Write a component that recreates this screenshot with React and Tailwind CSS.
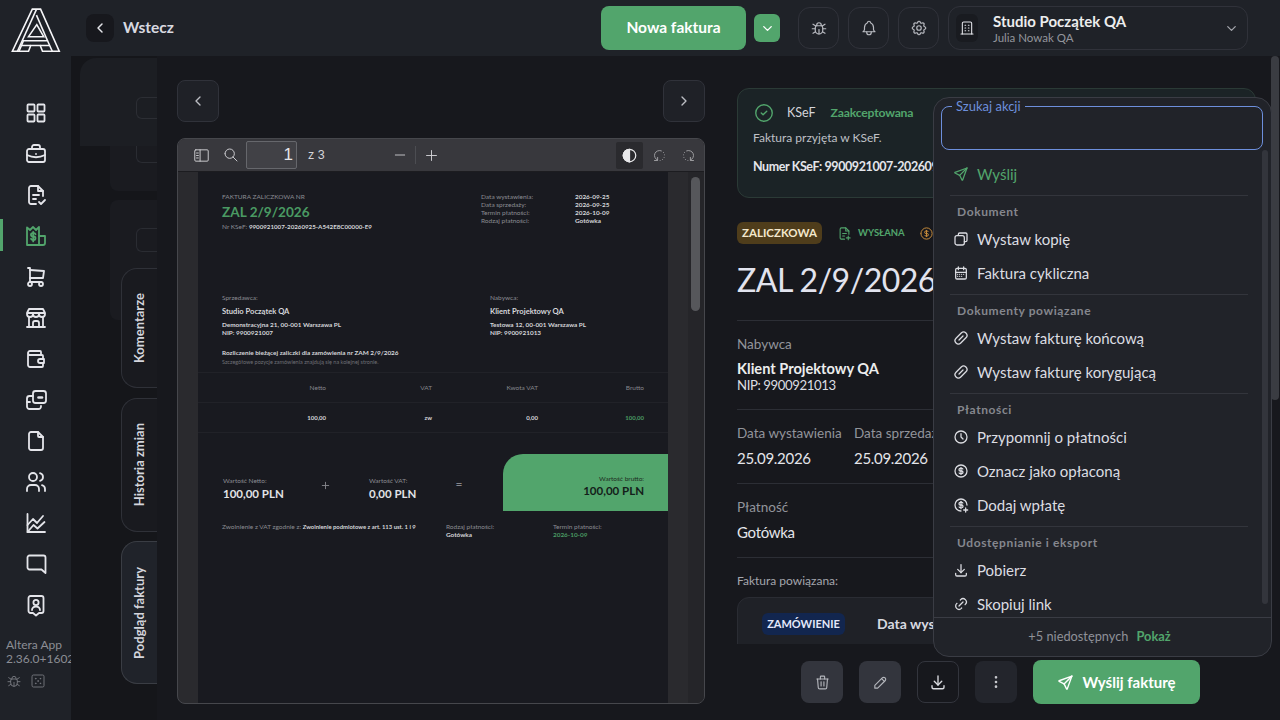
import React from "react";
import {
  TbBug, TbBell, TbSettings, TbBuilding, TbChevronDown, TbChevronLeft, TbChevronRight,
  TbTrash, TbPencil, TbDownload, TbDotsVertical, TbSend, TbBriefcase,
  TbShoppingCart, TbBuildingStore, TbWallet, TbFile, TbUsers,
  TbDice5, TbSearch, TbMinus, TbPlus,
  TbRotate2, TbRotateClockwise2, TbCircleCheck, TbCoin,
  TbCalendarMonth, TbLink, TbClock,
} from "react-icons/tb";

const font = { fontFamily: "Lato, 'Noto Sans', sans-serif" };

const Svg = ({ size = 24, strokeWidth = 2, className, children }) => (
  <svg width={size} height={size} viewBox="0 0 24 24" fill="none" stroke="currentColor" strokeWidth={strokeWidth} strokeLinecap="round" strokeLinejoin="round" className={className}>{children}</svg>
);
const IGrid = (p) => <Svg {...p}><rect x="3.5" y="3.5" width="7" height="7" rx="0.8" /><rect x="13.5" y="3.5" width="7" height="7" rx="0.8" /><rect x="3.5" y="13.5" width="7" height="7" rx="0.8" /><rect x="13.5" y="13.5" width="7" height="7" rx="0.8" /></Svg>;
const IFileCheck = (p) => <Svg {...p}><path d="M12 21H7a2 2 0 0 1-2-2V5a2 2 0 0 1 2-2h7l5 5v5" /><path d="M14 3v5h5" /><path d="M9 12h6" /><path d="M9 16h3" /><path d="M15 19l2 2 4-4" /></Svg>;
const IFileSend = (p) => <Svg {...p}><path d="M12 21H7a2 2 0 0 1-2-2V5a2 2 0 0 1 2-2h7l5 5v5" /><path d="M14 3v5h5" /><path d="M9 12h6" /><path d="M9 16h3" /><path d="M15 19h6" /><path d="M18 16v6" /></Svg>;
const IReceipt = (p) => <Svg {...p}><path d="M3 21V3.5L6 6l3-3 3 3 3-3v18z" /><path d="M15 12h6v7a2 2 0 0 1-2 2h-4" /><path d="M11.5 10.2a1.5 1.5 0 0 0-1.4-1H8.6a1.6 1.6 0 0 0 0 3.3h1.2a1.6 1.6 0 0 1 0 3.3H8.4a1.5 1.5 0 0 1-1.4-1" /><path d="M9.2 7.8v9.6" /></Svg>;
const IWalletSwap = (p) => <Svg {...p}><rect x="9" y="3" width="13" height="12" rx="2.5" /><path d="M14.5 9.5H18" strokeWidth="2.6" /><path d="M9 8H5.5a2.5 2.5 0 0 0-2.5 2.5V13" /><path d="M3 14h3" /><path d="M3 14v4.5A2.5 2.5 0 0 0 5.5 21h9a2.5 2.5 0 0 0 2.5-2.5V18" /></Svg>;
const IChart = (p) => <Svg {...p}><path d="M3.5 3v18H21" /><path d="M3.5 14L9 8l4 4 6-7" /><path d="M3.5 21l6-7 4 3.5 7-6.5" /></Svg>;
const IMsg = (p) => <Svg {...p}><path d="M5.5 3.5h14a2 2 0 0 1 2 2V21l-4-3.5h-12a2 2 0 0 1-2-2v-10a2 2 0 0 1 2-2z" /></Svg>;
const IUserTag = (p) => <Svg {...p}><path d="M6.5 3h11a2 2 0 0 1 2 2v13a2 2 0 0 1-2 2H15l-3 2.5L9 20H6.5a2 2 0 0 1-2-2V5a2 2 0 0 1 2-2z" /><circle cx="12" cy="9.5" r="2.6" /><path d="M8 17a4 3.5 0 0 1 8 0" /></Svg>;
const ICopy = (p) => <Svg {...p}><path d="M8 6.5V5a2 2 0 0 1 2-2h9a2 2 0 0 1 2 2v9a2 2 0 0 1-2 2h-2" /><rect x="3" y="7" width="14" height="14" rx="3" /></Svg>;
const ILink2 = (p) => <Svg {...p}><rect x="1.5" y="7" width="21" height="10" rx="5" transform="rotate(-45 12 12)" /><path d="M9 15l6-6" /></Svg>;
const ICoinPlus = (p) => <Svg {...p}><path d="M21 12a9 9 0 1 0-9 9" /><path d="M14.8 9a2 2 0 0 0-1.8-1h-2a2 2 0 1 0 0 4h2a2 2 0 0 1 1.2 3.6" /><path d="M9.2 15a2 2 0 0 0 1.8 1h1" /><path d="M12 6.5v11" /><path d="M16 19.5h6" /><path d="M19 16.5v6" /></Svg>;
const IPanel = (p) => <Svg {...p}><rect x="2.5" y="4" width="19" height="16" rx="1.5" /><path d="M10 4v16" /><path d="M5 8.5h2.5M5 12h2.5M5 15.5h2.5" /></Svg>;
const IHalf = ({ size = 16 }) => (
  <svg width={size} height={size} viewBox="0 0 24 24" fill="none" stroke="#e8e8ea" strokeWidth="2"><circle cx="12" cy="12" r="10" /><path d="M12 2a10 10 0 0 0 0 20z" fill="#e8e8ea" /></svg>
);

function Logo() {
  return (
    <svg width="57" height="47.5" viewBox="0 0 180 150" fill="none" stroke="#f6f6f8" strokeWidth="5" strokeLinejoin="miter">
      <path d="M80 13H106L165 146H112L105 128H75L68 146H17Z" />
      <path d="M93 14L33 146" />
      <path d="M38 146L52 113H128L143 146" />
      <path d="M47 128H75M105 128H135" />
      <path d="M93 32L128 113" />
      <path d="M94 62L116 100H68Z" />
    </svg>
  );
}

const sideIcons = [IGrid, TbBriefcase, IFileCheck, IReceipt, TbShoppingCart, TbBuildingStore, TbWallet, IWalletSwap, TbFile, TbUsers, IChart, IMsg, IUserTag];

function Sidebar() {
  return (
    <aside className="w-[71px] shrink-0 h-full bg-[#1f2228] flex flex-col">
      <div className="h-[56px] pl-[7px] pt-[5px]"><Logo /></div>
      <div className="mt-[36px] flex flex-col">
        {sideIcons.map((I, i) => (
          <div key={i} className="h-[41px] flex items-center justify-center relative">
            {i === 3 && <div className="absolute left-0 top-[4px] w-[3px] h-[32px] bg-[#52a56c]" />}
            <I size={24} strokeWidth={1.8} className={i === 3 ? "text-[#52a56c]" : "text-[#e4e5ea]"} />
          </div>
        ))}
      </div>
      <div className="mt-[13px] pl-[6px] text-[12px] leading-[14px] text-[#8c8e95] whitespace-nowrap">
        <div>Altera App</div>
        <div>2.36.0+1602</div>
        <div className="flex gap-[8px] mt-[7px] text-[#75777e]"><TbBug size={16} strokeWidth={1.4} /><TbDice5 size={16} strokeWidth={1.4} /></div>
      </div>
    </aside>
  );
}

function IconBtn({ I }) {
  return (
    <div className="w-[41px] h-[42px] rounded-xl border border-[#30323a] flex items-center justify-center text-[#b8bac0]">
      <I size={18} strokeWidth={1.6} />
    </div>
  );
}

function Header() {
  return (
    <header className="h-[56px] shrink-0 bg-[#1f2228] flex items-center">
      <div className="ml-[15px] w-[28px] h-[28px] rounded-lg bg-[#17181d] flex items-center justify-center text-[#e4e5ea]"><TbChevronLeft size={16} strokeWidth={2.2} /></div>
      <div className="ml-[9px] text-[15.5px] font-bold text-[#d8d9e0] w-[478px]">Wstecz</div>
      <div className="w-[145px] h-[44px] rounded-lg bg-[#52a56c] text-white font-bold text-[15.5px] flex items-center justify-center">Nowa faktura</div>
      <div className="ml-[8px] w-[26px] h-[28px] rounded-md bg-[#52a56c] text-white flex items-center justify-center"><TbChevronDown size={15} strokeWidth={2.2} /></div>
      <div className="ml-[18px] flex gap-[9px]"><IconBtn I={TbBug} /><IconBtn I={TbBell} /><IconBtn I={TbSettings} /></div>
      <div className="ml-[9px] w-[300px] h-[44px] rounded-xl border border-[#30323a] flex items-center pl-[7px] pr-[8px]">
        <div className="w-[22px] h-[28px] rounded-md bg-[#191b20] flex items-center justify-center text-[#e4e5ea]"><TbBuilding size={16} strokeWidth={1.6} /></div>
        <div className="ml-[15px] flex-1">
          <div className="text-[15px] leading-[18px] font-bold text-[#eceded]">Studio Początek QA</div>
          <div className="text-[11.5px] leading-[14px] mt-[1px] text-[#93959c]">Julia Nowak QA</div>
        </div>
        <TbChevronDown size={15} className="text-[#a4a6ad]" />
      </div>
    </header>
  );
}

function VTab({ label, h, active, mt }) {
  return (
    <div className={`${h} ${mt} w-[36px] rounded-l-2xl border-l border-y flex items-center justify-center ${active ? "bg-[#20232a] border-[#3a3d44]" : "bg-[#191a1f] border-[#2f3138]"}`}>
      <span className="[writing-mode:vertical-rl] rotate-180 text-[13px] font-bold text-[#d4d5dc] whitespace-nowrap">{label}</span>
    </div>
  );
}

function Strip() {
  return (
    <div className="w-[86px] shrink-0 h-full bg-[#15161a] flex flex-col relative overflow-hidden">
      <div className="h-[88px] ml-[9px] mt-[2px] bg-[#1c1e23] rounded-tl-2xl pl-[56px] pt-[39px] shrink-0">
        <div className="h-[22px] rounded-l-md border-y border-l border-[#2c2e34]" />
      </div>
      <div className="h-[45px] shrink-0 ml-[39px] bg-[#1a1b20] rounded-bl-lg pl-[26px]">
        <div className="h-[17px] rounded-bl-md border-b border-l border-[#2a2c32]" />
      </div>
      <div className="h-[120px] shrink-0 mt-[9px] ml-[39px] bg-[#1a1b20] rounded-l-lg pl-[26px] pt-[28px]">
        <div className="h-[24px] rounded-l-md border-y border-l border-[#2a2c32]" />
      </div>
      <div className="absolute left-[50px] top-[212px] flex flex-col">
        <VTab label="Komentarze" h="h-[120px]" />
        <VTab label="Historia zmian" h="h-[134px]" mt="mt-[10px]" />
        <VTab label="Podgląd faktury" h="h-[143px]" mt="mt-[9px]" active />
      </div>
    </div>
  );
}

const T = ({ c = "", children }) => <div className={`whitespace-nowrap ${c}`}>{children}</div>;

function PdfPage() {
  const lab = "text-[6.5px] leading-[8px] text-[#8b8c92]";
  const val = "text-[6.4px] leading-[8px] font-bold text-[#d5d6da]";
  return (
    <div className="w-[470px] shrink-0 bg-[#191a20] h-full overflow-hidden">
      <div className="flex mt-[21px] pt-0">
        <div className="ml-[24px] w-[259px]">
          <T c={lab}>FAKTURA ZALICZKOWA NR</T>
          <T c="h-[22px] leading-[22px] text-[13.6px] font-bold text-[#4a9a63]">ZAL 2/9/2026</T>
          <T c={lab}>Nr KSeF: <span className="font-bold text-[#d5d6da] text-[6.2px]">9900921007-20260925-A542E8C00000-E9</span></T>
        </div>
        <div>
          {[["Data wystawienia:", "2026-09-25"], ["Data sprzedaży:", "2026-09-25"], ["Termin płatności:", "2026-10-09"], ["Rodzaj płatności:", "Gotówka"]].map(([a, b]) => (
            <div key={a} className="flex"><T c={`${lab} w-[94px]`}>{a}</T><T c={val}>{b}</T></div>
          ))}
        </div>
      </div>
      <div className="flex mt-[63px] ml-[24px]">
        {[["Sprzedawca:", "Studio Początek QA", "Demonstracyjna 21, 00-001 Warszawa PL", "NIP: 9900921007"], ["Nabywca:", "Klient Projektowy QA", "Testowa 12, 00-001 Warszawa PL", "NIP: 9900921013"]].map(([a, b, c, d]) => (
          <div key={a} className="w-[268px] shrink-0">
            <T c={lab}>{a}</T>
            <T c="mt-[5px] text-[7.6px] leading-[8px] font-bold text-[#d5d6da]">{b}</T>
            <T c={`mt-[6px] ${val}`}>{c}</T>
            <T c={val}>{d}</T>
          </div>
        ))}
      </div>
      <T c={`ml-[24px] mt-[12px] ${val}`}>Rozliczenie bieżącej zaliczki dla zamówienia nr ZAM 2/9/2026</T>
      <T c="ml-[24px] mt-[1px] text-[5.5px] leading-[8px] text-[#6f7076]">Szczegółowe pozycje zamówienia znajdują się na kolejnej stronie.</T>
      <div className="mt-[6px] h-[31px] border-y border-[#212228] flex items-center text-right text-[6.5px] text-[#85868c]">
        <div className="w-[128px]">Netto</div><div className="w-[106px]">VAT</div><div className="w-[106px]">Kwota VAT</div><div className="w-[106px]">Brutto</div>
      </div>
      <div className="h-[30px] border-b border-[#212228] flex items-center text-right text-[6px] font-bold text-[#d5d6da]">
        <div className="w-[128px]">100,00</div><div className="w-[106px]">zw</div><div className="w-[106px]">0,00</div><div className="w-[106px] text-[#4a9a63]">100,00</div>
      </div>
      <div className="mt-[21px] h-[57px] flex">
        <div className="ml-[25px] w-[90px] pt-[23px]">
          <T c={lab}>Wartość Netto:</T>
          <T c="mt-[2px] text-[11.5px] leading-[14px] font-bold text-[#e2e3e6]">100,00 PLN</T>
        </div>
        <div className="w-[24px] pt-[26px] flex justify-center text-[#85868c]"><TbPlus size={11} /></div>
        <div className="ml-[32px] w-[78px] pt-[23px]">
          <T c={lab}>Wartość VAT:</T>
          <T c="mt-[2px] text-[11.5px] leading-[14px] font-bold text-[#e2e3e6]">0,00 PLN</T>
        </div>
        <div className="w-[24px] pt-[23px] text-center text-[12px] leading-[14px] text-[#85868c]">=</div>
        <div className="ml-[32px] w-[165px] rounded-tl-[20px] bg-[#52a56c] pt-[21px] pr-[24px] text-right">
          <T c="text-[6.5px] leading-[8px] text-[#1d2c22]">Wartość brutto:</T>
          <T c="mt-[1px] text-[11.5px] leading-[14px] font-bold text-[#14201a]">100,00 PLN</T>
        </div>
      </div>
      <div className="mt-[12px] flex ml-[24px]">
        <T c={`${lab} w-[224px] text-[6.2px]`}>Zwolnienie z VAT zgodnie z: <span className="font-bold text-[#d5d6da] text-[5.9px]">Zwolnienie podmiotowe z art. 113 ust. 1 i 9</span></T>
        <div className="w-[107px]"><T c={lab}>Rodzaj płatności:</T><T c={val}>Gotówka</T></div>
        <div><T c={lab}>Termin płatności:</T><T c={`${val} !text-[#4a9a63]`}>2026-10-09</T></div>
      </div>
    </div>
  );
}

function Viewer() {
  return (
    <div className="mt-[16px] h-[566px] w-[528px] rounded-lg border border-[#46474c] overflow-hidden flex flex-col bg-[#2a2a2e]">
      <div className="h-[33px] shrink-0 bg-[#38383d] border-b border-[#1c1c20] flex items-center text-[#d4d4d8] relative">
        <IPanel size={17} strokeWidth={1.3} className="ml-[15px]" />
        <TbSearch size={16} strokeWidth={1.4} className="ml-[13px]" />
        <div className="ml-[7px] w-[51px] h-[28px] border border-[#66676c] rounded-[2px] bg-[#414146] text-right pr-[3px] text-[17px] leading-[26px] font-['Liberation_Sans'] text-[#e4e4e8]">1</div>
        <div className="ml-[11px] text-[12.5px] font-['Liberation_Sans'] text-[#d4d4d8] w-[84px]">z 3</div>
        <TbMinus size={16} strokeWidth={1.3} />
        <div className="mx-[7px] w-px h-[18px] bg-[#4c4d52]" />
        <TbPlus size={17} strokeWidth={1.3} />
        <div className="ml-[176px] w-[27px] h-[27px] bg-[#2a2a2e] rounded-[2px] flex items-center justify-center"><IHalf size={15} /></div>
        <TbRotate2 size={15} strokeWidth={1.4} className="ml-[9px] text-[#a8a8ac]" />
        <TbRotateClockwise2 size={15} strokeWidth={1.4} className="ml-[14px] text-[#a8a8ac]" />
      </div>
      <div className="flex-1 flex min-h-0">
        <div className="w-[20px] shrink-0" />
        <PdfPage />
        <div className="w-[20px] shrink-0" />
        <div className="flex-1 pl-[3px] bg-[#252529] pt-[5px]"><div className="w-[9px] h-[134px] rounded-full bg-[#56575b]" /></div>
      </div>
    </div>
  );
}

function Center() {
  const b = "w-[42px] h-[42px] rounded-lg border border-[#30323a] bg-[#1f2127] flex items-center justify-center text-[#bcbec4]";
  return (
    <div className="w-[580px] shrink-0 pl-[20px] pt-[24px]">
      <div className="w-[528px] flex justify-between">
        <div className={b}><TbChevronLeft size={16} /></div>
        <div className={b}><TbChevronRight size={16} /></div>
      </div>
      <Viewer />
    </div>
  );
}

const Hr = ({ mt }) => <div className={`${mt} h-px bg-[#2c2e35]`} />;

function Details() {
  const lab = "h-[20px] leading-[20px] text-[13.5px] text-[#92949b] whitespace-nowrap";
  const val = "h-[22px] leading-[22px] text-[15px] tracking-[-0.3px] text-[#e4e5ea] whitespace-nowrap";
  return (
    <div className="w-[519px] shrink-0 pt-[32px] flex flex-col h-full">
      <div className="h-[556px] overflow-hidden shrink-0">
        <div className="h-[110px] rounded-xl border border-[#2b3a36] bg-[#1b2326] pl-[15px] pt-[13px] text-[12.5px]">
          <div className="flex items-center h-[22px]">
            <TbCircleCheck size={22} strokeWidth={1.5} className="text-[#52a56c]" />
            <span className="ml-[12px] text-[#d4d5da]">KSeF</span>
            <span className="ml-[15px] text-[12.2px] font-bold text-[#52a56c] tracking-[-0.2px]">Zaakceptowana</span>
          </div>
          <div className="mt-[3px] h-[22px] leading-[22px] text-[12px] text-[#bfc0c6]">Faktura przyjęta w KSeF.</div>
          <div className="mt-[7px] h-[22px] leading-[22px] tracking-[-0.4px] font-bold text-[#e4e5ea] whitespace-nowrap">Numer KSeF: 9900921007-20260925-A542E8C00000-E9</div>
        </div>
        <div className="mt-[24px] h-[22px] flex items-center">
          <div className="w-[85px] h-[22px] rounded-md bg-[#4f3d1b] text-[#f3e8cd] text-[11.5px] font-bold flex items-center justify-center">ZALICZKOWA</div>
          <IFileSend size={15} strokeWidth={1.7} className="ml-[15px] text-[#52a56c]" />
          <span className="ml-[6px] text-[9.5px] font-bold text-[#52a56c]">WYSŁANA</span>
          <TbCoin size={15} strokeWidth={1.6} className="ml-[14px] text-[#c58a3a]" />
        </div>
        <div className="mt-[14px] h-[44px] leading-[44px] text-[32px] tracking-[-0.5px] text-[#e2e3ee] whitespace-nowrap">ZAL 2/9/2026</div>
        <Hr mt="mt-[18px]" />
        <div className={`mt-[13px] ${lab}`}>Nabywca</div>
        <div className="mt-[6px] h-[18px] leading-[18px] text-[14.6px] font-bold text-[#eceded]">Klient Projektowy QA</div>
        <div className="-mt-px h-[16px] leading-[16px] text-[13.2px] tracking-[-0.4px] text-[#dcdde2]">NIP: 9900921013</div>
        <Hr mt="mt-[16px]" />
        <div className="mt-[13px] flex">
          <div className={`w-[117px] ${lab}`}>Data wystawienia</div>
          <div className={lab}>Data sprzedaży</div>
        </div>
        <div className="mt-[4px] flex">
          <div className={`w-[117px] ${val}`}>25.09.2026</div>
          <div className={val}>25.09.2026</div>
        </div>
        <Hr mt="mt-[14px]" />
        <div className={`mt-[13px] ${lab}`}>Płatność</div>
        <div className={`mt-[4px] ${val}`}>Gotówka</div>
        <Hr mt="mt-[14px]" />
        <div className="mt-[14px] h-[18px] leading-[18px] text-[12px] text-[#a4a6ad]">Faktura powiązana:</div>
        <div className="mt-[7px] h-[90px] rounded-xl border border-[#2a2c33] bg-[#1f2127] pl-[24px] pt-[15px] flex">
          <div className="w-[83px] h-[22px] rounded-md bg-[#12264f] text-[#e4e9fb] text-[11px] font-bold flex items-center justify-center">ZAMÓWIENIE</div>
          <div className="ml-[32px]">
            <div className="h-[22px] leading-[22px] text-[14px] font-bold text-[#d8d9e0]">Data wystawienia</div>
            <div className="mt-[7px] text-[13px] text-[#9a9ba3]">25.09.2026</div>
          </div>
        </div>
      </div>
      <div className="mt-[16px] flex items-center pl-[64px] gap-[16px]">
        <div className="w-[42px] h-[42px] rounded-lg bg-[#33353d] flex items-center justify-center text-[#b4b6bc]"><TbTrash size={17} strokeWidth={1.6} /></div>
        <div className="w-[42px] h-[42px] rounded-lg bg-[#33353d] flex items-center justify-center text-[#b4b6bc]"><TbPencil size={17} strokeWidth={1.6} /></div>
        <div className="w-[42px] h-[42px] rounded-lg border border-[#33353d] flex items-center justify-center text-[#dcdde2]"><TbDownload size={18} strokeWidth={1.8} /></div>
        <div className="w-[42px] h-[42px] rounded-lg bg-[#23252c] flex items-center justify-center text-[#c8c9ce]"><TbDotsVertical size={16} strokeWidth={2} /></div>
        <div className="w-[167px] h-[44px] rounded-lg bg-[#52a56c] flex items-center justify-center gap-[8px] text-white text-[15px] font-bold"><TbSend size={17} strokeWidth={2} />Wyślij fakturę</div>
      </div>
    </div>
  );
}

function Row({ I, label, green }) {
  return (
    <div className={`h-[34px] flex items-center pl-[19px] text-[15px] whitespace-nowrap ${green ? "text-[#52a56c]" : "text-[#dcdde2]"}`}>
      <I size={16} strokeWidth={1.9} />
      <span className="ml-[8px]">{label}</span>
    </div>
  );
}

const Sec = ({ children }) => <div className="h-[16px] leading-[16px] mt-[8px] mb-[2px] pl-[23px] text-[12px] font-bold tracking-[0.6px] text-[#85878e]">{children}</div>;
const MHr = () => <div className="mt-[4px] ml-[16px] mr-[14px] h-px bg-[#33353c]" />;

function Menu() {
  return (
    <div className="absolute left-[933px] top-[97px] w-[339px] h-[560px] rounded-2xl border border-[#3a3c44] bg-[#212329] flex flex-col overflow-hidden">
      <div className="relative ml-[7px] mr-[8px] mt-[8px] h-[44px] rounded-lg border border-[#6d8fdc] shrink-0">
        <span className="absolute left-[10px] top-[-9px] bg-[#212329] px-[4px] text-[13px] leading-[16px] text-[#6d8fdc]">Szukaj akcji</span>
      </div>
      <div className="flex-1 min-h-0 flex overflow-hidden relative">
        <div className="flex-1 overflow-hidden pt-[7px]">
          <Row I={TbSend} label="Wyślij" green />
          <MHr />
          <Sec>Dokument</Sec>
          <Row I={ICopy} label="Wystaw kopię" />
          <Row I={TbCalendarMonth} label="Faktura cykliczna" />
          <MHr />
          <Sec>Dokumenty powiązane</Sec>
          <Row I={ILink2} label="Wystaw fakturę końcową" />
          <Row I={ILink2} label="Wystaw fakturę korygującą" />
          <MHr />
          <Sec>Płatności</Sec>
          <Row I={TbClock} label="Przypomnij o płatności" />
          <Row I={TbCoin} label="Oznacz jako opłaconą" />
          <Row I={ICoinPlus} label="Dodaj wpłatę" />
          <MHr />
          <Sec>Udostępnianie i eksport</Sec>
          <Row I={TbDownload} label="Pobierz" />
          <Row I={TbLink} label="Skopiuj link" />
        </div>
        <div className="w-[6px] h-[454px] mr-[3px] rounded-full bg-[#33353c]" />
      </div>
      <div className="h-[39px] shrink-0 border-t border-[#3a3c44] flex items-center justify-center text-[12.8px] text-[#8f9198] pr-[6px]">
        +5 niedostępnych<span className="ml-[8px] font-bold text-[#52a56c]">Pokaż</span>
      </div>
    </div>
  );
}

export default function App() {
  return (
    <div style={font} className="relative w-[1280px] h-[720px] overflow-hidden flex bg-[#17181d]">
      <Sidebar />
      <div className="flex-1 flex flex-col min-w-0">
        <Header />
        <div className="flex-1 flex min-h-0">
          <Strip />
          <Center />
          <Details />
          <div className="flex-1 flex justify-end pr-px">
            <div className="w-[8px] h-[344px] rounded-full bg-[#3a3c42]" />
          </div>
        </div>
      </div>
      <Menu />
    </div>
  );
}
